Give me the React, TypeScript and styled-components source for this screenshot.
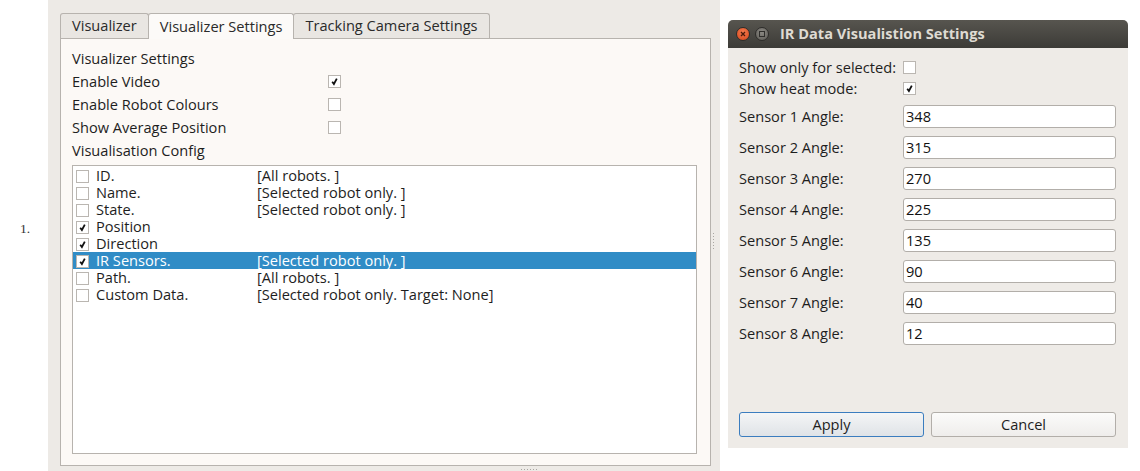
import { FC } from "react";
import styled, { createGlobalStyle } from "styled-components";

const GlobalStyle = createGlobalStyle`
	html, body {
		margin: 0;
		padding: 0;
		background: #ffffff;
	}
	body {
		font-family: "Open Sans", "DejaVu Sans", sans-serif;
		font-size: 14.6px;
		line-height: 16px;
		color: #1e1e1e;
	}
`;

// Open Sans sits a little low compared with Ubuntu, so text is lifted by a bottom pad
const Label = styled.span`
	line-height: 16px;
	padding-bottom: 2px;
	white-space: nowrap;
`;

const Page = styled.div`
	display: flex;
	width: 1140px;
	height: 471px;
	overflow: hidden;
`;

const Marker = styled.div`
	width: 48px;
	padding-top: 221px;
	padding-left: 20px;
	box-sizing: border-box;
	font-family: "Liberation Serif", serif;
	font-size: 13.5px;
	color: #333;
`;

const Panel = styled.div`
	position: relative;
	width: 672px;
	height: 471px;
	background: #edeae6;
	padding: 12px 9px 5px 12px;
	box-sizing: border-box;
	display: flex;
	flex-direction: column;
`;

const TabBar = styled.div`
	display: flex;
	align-items: flex-end;
	height: 26px;
`;

const Tab = styled.div<{ $active?: boolean }>`
	height: ${p => (p.$active ? "26px" : "25px")};
	padding: 0 11px;
	box-sizing: border-box;
	display: flex;
	align-items: center;
	border: 1px solid #b7b3ae;
	border-bottom: none;
	border-radius: 3px 3px 0 0;
	margin-right: ${p => (p.$active ? "-1px" : "0")};
	margin-left: ${p => (p.$active ? "-1px" : "0")};
	background: ${p => (p.$active ? "#fcfaf8" : "#e9e6e2")};
	position: relative;
	z-index: ${p => (p.$active ? 2 : 1)};
	margin-bottom: ${p => (p.$active ? "-1px" : "0")};
	color: #2a2a2a;
`;

const TabPane = styled.div`
	flex: 1;
	border: 1px solid #b7b3ae;
	background: #fcf9f6;
	padding: 8px 13px 11px 11px;
	display: flex;
	flex-direction: column;
`;

const SettingRow = styled.div`
	display: grid;
	grid-template-columns: 256px auto;
	align-items: center;
	height: 23px;
`;

const Box = styled.span`
	width: 13px;
	height: 13px;
	box-sizing: border-box;
	border: 1px solid #bab6b1;
	background: #ffffff;
	display: inline-flex;
	align-items: center;
	justify-content: center;
	flex-shrink: 0;
`;

const ListBox = styled.div`
	margin-top: 3px;
	flex: 1;
	border: 1px solid #b7b3ae;
	background: #ffffff;
	padding-top: 1px;
`;

const ListRow = styled.div<{ $selected?: boolean }>`
	display: grid;
	grid-template-columns: 181px auto;
	align-items: center;
	height: 17px;
	padding-left: 3px;
	background: ${p => (p.$selected ? "#308cc6" : "transparent")};
	color: ${p => (p.$selected ? "#ffffff" : "#1e1e1e")};
`;

const ItemName = styled.span`
	display: flex;
	align-items: center;
	gap: 7px;
`;

const VSplitDots = styled.div`
	position: absolute;
	right: 6px;
	top: 233px;
	width: 1px;
	height: 17px;
	background: repeating-linear-gradient(#a9a6a2 0 1px, transparent 1px 3px);
`;

const HSplitDots = styled.div`
	position: absolute;
	left: 473px;
	bottom: 1px;
	width: 17px;
	height: 1px;
	background: repeating-linear-gradient(90deg, #a9a6a2 0 1px, transparent 1px 3px);
`;

const DialogArea = styled.div`
	padding: 20px 0 0 8px;
`;

const Dialog = styled.div`
	width: 400px;
	height: 428px;
	display: flex;
	flex-direction: column;
	border-radius: 5px 5px 0 0;
	overflow: hidden;
	background: #eeebe7;
`;

const TitleBar = styled.div`
	height: 28px;
	background: linear-gradient(#57554f, #3c3b37);
	display: flex;
	align-items: center;
	padding-left: 8px;
	gap: 5px;
`;

const WinButton = styled.span<{ $close?: boolean }>`
	width: 14px;
	height: 14px;
	border-radius: 50%;
	display: inline-flex;
	align-items: center;
	justify-content: center;
	background: ${p =>
		p.$close
			? "radial-gradient(circle at 50% 35%, #f37a4e, #d8471c)"
			: "radial-gradient(circle at 50% 35%, #8a8882, #5e5c57)"};
	border: 1px solid #2e2d2a;
	box-sizing: border-box;
`;

const Title = styled(Label)`
	margin-left: 6px;
	font-weight: 700;
	color: #dfdbd2;
`;

const DialogBody = styled.div`
	flex: 1;
	display: flex;
	flex-direction: column;
	padding: 9px 12px 11px 11px;
`;

const FormRow = styled.div<{ $input?: boolean }>`
	display: grid;
	grid-template-columns: 164px 1fr;
	align-items: center;
	height: ${p => (p.$input ? "23px" : "21px")};
`;

const SensorList = styled.div`
	margin-top: 6px;
	display: flex;
	flex-direction: column;
	gap: 8px;
`;

const TextInput = styled.div`
	height: 23px;
	box-sizing: border-box;
	border: 1px solid #b2aea9;
	border-radius: 3px;
	background: #ffffff;
	padding-left: 2px;
	display: flex;
	align-items: center;
	color: #111;
`;

const Footer = styled.div`
	margin-top: auto;
	display: grid;
	grid-template-columns: 1fr 1fr;
	gap: 7px;
`;

const Button = styled.div<{ $default?: boolean }>`
	height: 25px;
	box-sizing: border-box;
	border: 1px solid ${p => (p.$default ? "#3b7dbf" : "#b2aea9")};
	border-radius: 3px;
	background: ${p =>
		p.$default ? "linear-gradient(#f4f5f6, #dfe3e7)" : "linear-gradient(#fbfbfa, #efedeb)"};
	display: flex;
	align-items: center;
	justify-content: center;
	color: #1e1e1e;
`;

const Check: FC<{ on?: boolean }> = ({ on }) => (
	<Box>
		{on && (
			<svg width="9" height="9" viewBox="0 0 9 9">
				<path d="M2.2 4.8 L3.9 7 L6.8 1.6" fill="none" stroke="#111" strokeWidth="1.8" />
			</svg>
		)}
	</Box>
);

const settings = [
	{ label: "Enable Video", on: true },
	{ label: "Enable Robot Colours", on: false },
	{ label: "Show Average Position", on: false },
];

const items = [
	{ name: "ID.", on: false, scope: "[All robots. ]" },
	{ name: "Name.", on: false, scope: "[Selected robot only. ]" },
	{ name: "State.", on: false, scope: "[Selected robot only. ]" },
	{ name: "Position", on: true, scope: "" },
	{ name: "Direction", on: true, scope: "" },
	{ name: "IR Sensors.", on: true, scope: "[Selected robot only. ]", selected: true },
	{ name: "Path.", on: false, scope: "[All robots. ]" },
	{ name: "Custom Data.", on: false, scope: "[Selected robot only. Target: None]" },
];

const sensors = [348, 315, 270, 225, 135, 90, 40, 12];

export default function App() {
	return (
		<Page>
			<GlobalStyle />
			<Marker>1.</Marker>
			<Panel>
				<TabBar>
					<Tab>
						<Label>Visualizer</Label>
					</Tab>
					<Tab $active>
						<Label>Visualizer Settings</Label>
					</Tab>
					<Tab>
						<Label>Tracking Camera Settings</Label>
					</Tab>
				</TabBar>
				<TabPane>
					<SettingRow>
						<Label>Visualizer Settings</Label>
					</SettingRow>
					{settings.map(s => (
						<SettingRow key={s.label}>
							<Label>{s.label}</Label>
							<Check on={s.on} />
						</SettingRow>
					))}
					<SettingRow>
						<Label>Visualisation Config</Label>
					</SettingRow>
					<ListBox>
						{items.map(item => (
							<ListRow key={item.name} $selected={item.selected}>
								<ItemName>
									<Check on={item.on} />
									<Label>{item.name}</Label>
								</ItemName>
								<Label>{item.scope}</Label>
							</ListRow>
						))}
					</ListBox>
				</TabPane>
				<VSplitDots />
				<HSplitDots />
			</Panel>
			<DialogArea>
				<Dialog>
					<TitleBar>
						<WinButton $close>
							<svg width="6" height="6" viewBox="0 0 6 6">
								<path d="M1 1 L5 5 M5 1 L1 5" stroke="#4a1a0c" strokeWidth="1.3" />
							</svg>
						</WinButton>
						<WinButton>
							<svg width="6" height="6" viewBox="0 0 6 6">
								<rect x="0.5" y="0.5" width="5" height="5" fill="none" stroke="#2f2e2b" strokeWidth="1" />
							</svg>
						</WinButton>
						<Title>IR Data Visualistion Settings</Title>
					</TitleBar>
					<DialogBody>
						<FormRow>
							<Label>Show only for selected:</Label>
							<Check />
						</FormRow>
						<FormRow>
							<Label>Show heat mode:</Label>
							<Check on />
						</FormRow>
						<SensorList>
							{sensors.map((v, i) => (
								<FormRow key={i} $input>
									<Label>Sensor {i + 1} Angle:</Label>
									<TextInput>
										<Label>{v}</Label>
									</TextInput>
								</FormRow>
							))}
						</SensorList>
						<Footer>
							<Button $default>
								<Label>Apply</Label>
							</Button>
							<Button>
								<Label>Cancel</Label>
							</Button>
						</Footer>
					</DialogBody>
				</Dialog>
			</DialogArea>
		</Page>
	);
}
